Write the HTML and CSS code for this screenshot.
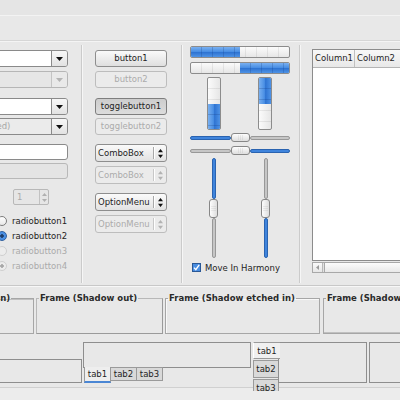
FILE: index.html
```html
<!DOCTYPE html>
<html lang="en">
<head>
  <meta charset="UTF-8">
  <meta name="viewport" content="width=device-width, initial-scale=1.0">
  <title>Widget Factory</title>
  <link rel="stylesheet" href="styles.css">
</head>
<body>
  <div class="window">
    <div class="menubar"></div>
    <div class="toolbar"></div>

    <div class="main">
      <!-- Entries, combos, spin, radios -->
      <div class="col col-a">
        <div class="combo">
          <div class="combo-entry"></div>
          <div class="combo-btn"><svg width="7" height="4" viewBox="0 0 7 4"><path d="M0 0h7L3.5 4z"/></svg></div>
        </div>
        <div class="combo combo-off gap-s">
          <div class="combo-entry"></div>
          <div class="combo-btn"><svg width="7" height="4" viewBox="0 0 7 4"><path d="M0 0h7L3.5 4z"/></svg></div>
        </div>
        <div class="combo gap-l">
          <div class="combo-entry"></div>
          <div class="combo-btn"><svg width="7" height="4" viewBox="0 0 7 4"><path d="M0 0h7L3.5 4z"/></svg></div>
        </div>
        <div class="combo combo-ro gap-xs">
          <div class="combo-entry">(disabled)</div>
          <div class="combo-btn"><svg width="7" height="4" viewBox="0 0 7 4"><path d="M0 0h7L3.5 4z"/></svg></div>
        </div>
        <div class="entry gap-m"></div>
        <div class="entry entry-off gap-xs"></div>
        <div class="spin">
          <span class="spin-val">1</span>
          <div class="spin-btns">
            <svg width="5" height="3" viewBox="0 0 5 3"><path d="M2.5 0L5 3H0z"/></svg>
            <svg width="5" height="3" viewBox="0 0 5 3"><path d="M0 0h5L2.5 3z"/></svg>
          </div>
        </div>
        <div class="radios">
          <div class="radio-row"><span class="radio"></span>radiobutton1</div>
          <div class="radio-row"><span class="radio on"></span>radiobutton2</div>
          <div class="radio-row off"><span class="radio"></span>radiobutton3</div>
          <div class="radio-row off"><span class="radio on"></span>radiobutton4</div>
        </div>
      </div>
      <div class="vsep"></div>

      <!-- Buttons -->
      <div class="col col-b">
        <div class="btn">button1</div>
        <div class="btn btn-off gap-s">button2</div>
        <div class="btn btn-down gap-l">togglebutton1</div>
        <div class="btn btn-off gap-xs">togglebutton2</div>
        <div class="cbox gap-m">
          <span class="cbox-text">ComboBox</span>
          <span class="cbox-sep"></span>
          <span class="cbox-arrows"><svg width="5" height="9" viewBox="0 0 5 9"><path d="M2.5 0L5 3.2H0zM0 5.8h5L2.5 9z"/></svg></span>
        </div>
        <div class="cbox cbox-off gap-s">
          <span class="cbox-text">ComboBox</span>
          <span class="cbox-sep"></span>
          <span class="cbox-arrows"><svg width="5" height="9" viewBox="0 0 5 9"><path d="M2.5 0L5 3.2H0zM0 5.8h5L2.5 9z"/></svg></span>
        </div>
        <div class="cbox gap-m">
          <span class="cbox-text">OptionMenu</span>
          <span class="cbox-sep"></span>
          <span class="cbox-arrows"><svg width="5" height="9" viewBox="0 0 5 9"><path d="M2.5 0L5 3.2H0zM0 5.8h5L2.5 9z"/></svg></span>
        </div>
        <div class="cbox cbox-off gap-s">
          <span class="cbox-text">OptionMenu</span>
          <span class="cbox-sep"></span>
          <span class="cbox-arrows"><svg width="5" height="9" viewBox="0 0 5 9"><path d="M2.5 0L5 3.2H0zM0 5.8h5L2.5 9z"/></svg></span>
        </div>
      </div>
      <div class="vsep"></div>

      <!-- Progress bars and scales -->
      <div class="col col-c">
        <div class="hprog"><div class="fill" style="width: 50%"></div></div>
        <div class="hprog hprog-rev"><div class="fill" style="width: 50%"></div></div>
        <div class="vprog-row">
          <div class="vprog"><div class="fill" style="height: 50%"></div></div>
          <div class="vprog vprog-rev"><div class="fill" style="height: 50%"></div></div>
        </div>
        <div class="hscale one">
          <div class="trough blue" style="width: 43px"></div>
          <div class="thumb"></div>
          <div class="trough grey"></div>
        </div>
        <div class="hscale two">
          <div class="trough grey" style="width: 41px"></div>
          <div class="thumb"></div>
          <div class="trough blue"></div>
        </div>
        <div class="vscale-row">
          <div class="vscale">
            <div class="trough blue" style="height: 40px"></div>
            <div class="thumb"></div>
            <div class="trough grey"></div>
          </div>
          <div class="vscale">
            <div class="trough grey" style="height: 40px"></div>
            <div class="thumb"></div>
            <div class="trough blue"></div>
          </div>
        </div>
        <div class="check-row">
          <span class="check"><svg width="7" height="7" viewBox="0 0 7 7"><path d="M1 3.6l1.8 2L6.2 0.8" fill="none" stroke="#fff" stroke-width="1.4"/></svg></span>
          Move In Harmony
        </div>
      </div>
      <div class="vsep"></div>

      <!-- Tree view -->
      <div class="col col-d">
        <div class="tree">
          <div class="tree-head">
            <div class="tree-col first">Column1</div>
            <div class="tree-col">Column2</div>
          </div>
        </div>
        <div class="hscroll">
          <div class="hscroll-btn"><svg width="3" height="5" viewBox="0 0 3 5"><path d="M3 0v5L0 2.5z"/></svg></div>
          <div class="hscroll-slider"><span class="grip"></span></div>
        </div>
      </div>
    </div>

    <div class="hsep"></div>

    <!-- Frames -->
    <div class="frames">
      <fieldset class="frame f1"><legend>Frame (Shadow in)</legend></fieldset>
      <fieldset class="frame f2"><legend>Frame (Shadow out)</legend></fieldset>
      <fieldset class="frame f3"><legend>Frame (Shadow etched in)</legend></fieldset>
      <fieldset class="frame f4"><legend>Frame (Shadow etched out)</legend></fieldset>
    </div>

    <!-- Notebooks -->
    <div class="notebooks">
      <div class="nb nb-top"></div>
      <div class="nb nb-bottom">
        <div class="nb-page"></div>
        <div class="nb-tabs">
          <div class="tab active">tab1</div>
          <div class="tab">tab2</div>
          <div class="tab">tab3</div>
        </div>
      </div>
      <div class="nb nb-left">
        <div class="nb-tabs">
          <div class="tab active">tab1</div>
          <div class="tab">tab2</div>
          <div class="tab">tab3</div>
        </div>
        <div class="nb-page"></div>
      </div>
      <div class="nb nb-right"></div>
    </div>

    <div class="statusbar"></div>
  </div>
</body>
</html>
```

FILE: styles.css
```css
* {
  margin: 0;
  padding: 0;
  box-sizing: border-box;
}

html, body {
  width: 400px;
  height: 400px;
  overflow: hidden;
}

body {
  background: #e8e8e8;
  font-family: "DejaVu Sans", "Liberation Sans", sans-serif;
  font-size: 8.5px;
  color: #1e1e1e;
}

/* The window is wider than the shot, so it starts off to the left */
.window {
  margin-left: -90px;
  width: 520px;
}

.menubar {
  height: 16px;
  background: #e5e5e5;
  border-bottom: 1px solid #f3f3f3;
}

.toolbar {
  height: 25px;
  background: #e8e8e8;
  border-bottom: 1px solid #d6d6d6;
}

.main {
  display: flex;
  align-items: flex-start;
  height: 244px;
  border-top: 1px solid #f4f4f4;
}

.vsep {
  width: 2px;
  height: 238px;
  margin-top: 3px;
  border-left: 1px solid #cbcbcb;
  background: #f6f6f6;
}

.col {
  display: flex;
  flex-direction: column;
  flex-shrink: 0;
}

.col-a { width: 171px; padding-top: 8px; padding-left: 50px; }
.col-b { width: 98px; padding-top: 8px; padding-left: 12px; }
.col-c { width: 116px; padding-top: 4px; padding-left: 7px; }
.col-d { flex: 1; padding-top: 7px; padding-left: 11px; }

.gap-xs { margin-top: 3px; }
.gap-s { margin-top: 4px; }
.gap-m { margin-top: 9px; }
.gap-l { margin-top: 10px; }

/* Combo entries */
.combo {
  display: flex;
  width: 108px;
  height: 17px;
  border: 1px solid #8a8a8a;
  border-radius: 3px;
  overflow: hidden;
}

.combo-entry {
  flex: 1;
  background: #fff;
  line-height: 15px;
  padding-left: 7px;
  color: #a6a6a6;
}

.combo-btn {
  width: 16px;
  border-left: 1px solid #8a8a8a;
  background: linear-gradient(#f7f7f7, #e2e2e2);
  display: flex;
  align-items: center;
  justify-content: center;
  color: #111;
}

.combo-btn svg { fill: currentColor; }

.combo-off { border-color: #b6b6b6; }
.combo-off .combo-entry { background: #e6e6e6; }
.combo-off .combo-btn { border-color: #c4c4c4; background: #e9e9e9; color: #b4b4b4; }

.combo-ro .combo-entry { background: #ebebeb; }

.entry {
  width: 108px;
  height: 16px;
  border: 1px solid #8a8a8a;
  border-radius: 3px;
  background: #fff;
}

.entry-off {
  border-color: #b8b8b8;
  background: #e4e4e4;
}

.spin {
  display: flex;
  width: 36px;
  height: 16px;
  margin-top: 10px;
  margin-left: 53px;
  border: 1px solid #b8b8b8;
  border-radius: 2px;
  background: #e6e6e6;
  color: #ababab;
}

.spin-val {
  flex: 1;
  padding-left: 3px;
  line-height: 14px;
}

.spin-btns {
  width: 9px;
  border-left: 1px solid #c2c2c2;
  display: flex;
  flex-direction: column;
  align-items: center;
  justify-content: space-around;
  padding: 1px 0;
  fill: #b0b0b0;
}

/* Radio buttons */
.radios {
  margin-top: 8px;
  margin-left: 37px;
}

.radio-row {
  display: flex;
  align-items: center;
  height: 15px;
}

.radio {
  width: 10px;
  height: 10px;
  margin-right: 5px;
  border: 1px solid #7c7c7c;
  border-radius: 50%;
  background: linear-gradient(#ffffff, #e8e8e8);
}

.radio.on {
  border-color: #2e5f9f;
  background: radial-gradient(circle, #1e3e6a 0 1.5px, #4b8fe2 2px);
}

.radio-row.off { color: #ababab; }
.radio-row.off .radio { border-color: #cfcfcf; background: #ececec; }
.radio-row.off .radio.on { background: radial-gradient(circle, #a8a8a8 0 1.5px, #ececec 2px); }

/* Buttons */
.btn {
  width: 72px;
  height: 17px;
  border: 1px solid #8e8e8e;
  border-radius: 3px;
  background: linear-gradient(#fafafa, #dfdfdf);
  text-align: center;
  line-height: 15px;
}

.btn-off {
  border-color: #bdbdbd;
  background: #ebebeb;
  color: #ababab;
}

.btn-down {
  border-color: #7e7e7e;
  background: linear-gradient(#cdcdcd, #dcdcdc);
}

.cbox {
  display: flex;
  align-items: center;
  width: 72px;
  height: 18px;
  border: 1px solid #8e8e8e;
  border-radius: 3px;
  background: linear-gradient(#fafafa, #e2e2e2);
}

.cbox-text {
  flex: 1;
  padding-left: 2px;
}

.cbox-sep {
  width: 1px;
  height: 12px;
  background: #a8a8a8;
  box-shadow: 1px 0 0 #fff;
}

.cbox-arrows {
  width: 12px;
  display: flex;
  justify-content: center;
  fill: #111;
}

.cbox-off {
  border-color: #bdbdbd;
  background: #ebebeb;
  color: #ababab;
}

.cbox-off .cbox-sep { background: #c8c8c8; }
.cbox-off .cbox-arrows { fill: #b2b2b2; }

/* Progress bars */
.hprog {
  width: 100px;
  height: 12px;
  margin-bottom: 4px;
  display: flex;
  border: 1px solid #8c8c8c;
  border-radius: 2px;
  overflow: hidden;
  background:
    repeating-linear-gradient(90deg, transparent 0 10px, rgba(0, 0, 0, 0.07) 10px 11px),
    linear-gradient(#fbfbfb, #e6e6e6);
}

.hprog-rev { justify-content: flex-end; }

.fill {
  background:
    repeating-linear-gradient(90deg, transparent 0 10px, rgba(20, 60, 130, 0.25) 10px 11px),
    linear-gradient(#79b0f0, #4a8fe4 45%, #2f74d2 55%, #4f93e6);
}

.vprog-row {
  display: flex;
  gap: 37px;
  margin-top: -1px;
  padding-left: 17px;
}

.vprog {
  width: 14px;
  height: 53px;
  display: flex;
  flex-direction: column;
  justify-content: flex-end;
  border: 1px solid #8c8c8c;
  border-radius: 2px;
  overflow: hidden;
  background:
    repeating-linear-gradient(180deg, transparent 0 10px, rgba(0, 0, 0, 0.07) 10px 11px),
    linear-gradient(90deg, #fbfbfb, #e6e6e6);
}

.vprog-rev { justify-content: flex-start; }

.vprog .fill {
  background:
    repeating-linear-gradient(180deg, transparent 0 10px, rgba(20, 60, 130, 0.25) 10px 11px),
    linear-gradient(90deg, #79b0f0, #4a8fe4 45%, #2f74d2 55%, #4f93e6);
}

/* Scales */
.hscale {
  display: flex;
  align-items: center;
  width: 100px;
  height: 9px;
}

.hscale.one { margin-top: 3px; }
.hscale.two { margin-top: 4px; }

.trough {
  flex: 1;
  border-radius: 2px;
}

.hscale .trough { height: 4px; flex-shrink: 0; }
.hscale .trough.grey, .hscale .trough:last-child { flex: 1; }

.trough.blue {
  background: #3f84dc;
  border: 1px solid #2a63b0;
}

.trough.grey {
  background: #c6c6c6;
  border: 1px solid #989898;
}

.thumb {
  flex-shrink: 0;
  width: 19px;
  height: 9px;
  border: 1px solid #878787;
  border-radius: 3px;
  background:
    repeating-linear-gradient(90deg, transparent 0 1px, rgba(0, 0, 0, 0.06) 1px 2px) center / 7px 5px no-repeat,
    linear-gradient(#fdfdfd, #dedede);
}

.vscale-row {
  display: flex;
  gap: 43px;
  margin-top: 3px;
  padding-left: 19px;
}

.vscale {
  display: flex;
  flex-direction: column;
  align-items: center;
  width: 9px;
  height: 100px;
}

.vscale .trough { width: 4px; flex-shrink: 0; }
.vscale .trough:last-child { flex: 1; }

.vscale .thumb {
  width: 9px;
  height: 19px;
  background:
    repeating-linear-gradient(180deg, transparent 0 1px, rgba(0, 0, 0, 0.06) 1px 2px) center / 5px 7px no-repeat,
    linear-gradient(90deg, #fdfdfd, #dedede);
}

.check-row {
  display: flex;
  align-items: center;
  gap: 4px;
  margin-top: 5px;
  margin-left: 2px;
  height: 9px;
}

.check {
  width: 9px;
  height: 9px;
  border: 1px solid #2a5896;
  background: #4a8ee2;
  display: flex;
  align-items: center;
  justify-content: center;
}

/* Tree view */
.tree {
  height: 212px;
  border: 1px solid #8c8c8c;
  background: #fff;
}

.tree-head {
  display: flex;
  height: 18px;
  border-bottom: 1px solid #b4b4b4;
  background: linear-gradient(#f8f8f8, #e8e8e8);
  line-height: 17px;
}

.tree-col { padding-left: 2px; }

.tree-col.first {
  width: 42px;
  border-right: 1px solid #c0c0c0;
}

.hscroll {
  display: flex;
  height: 11px;
  margin-top: 1px;
  border: 1px solid #a8a8a8;
  background: #e2e2e2;
}

.hscroll-btn {
  width: 10px;
  border-right: 1px solid #b8b8b8;
  background: linear-gradient(#fafafa, #e6e6e6);
  display: flex;
  align-items: center;
  justify-content: center;
  fill: #9a9a9a;
}

.hscroll-slider {
  flex: 1;
  margin-left: 1px;
  display: flex;
  align-items: center;
  justify-content: flex-end;
  padding-right: 4px;
  border-left: 1px solid #a8a8a8;
  background: linear-gradient(#fcfcfc, #e8e8e8);
}

.grip {
  width: 10px;
  height: 5px;
  background: repeating-linear-gradient(90deg, transparent 0 1px, rgba(0, 0, 0, 0.1) 1px 2px);
}

.hsep {
  height: 2px;
  border-top: 1px solid #c8c8c8;
  background: #f7f7f7;
}

/* Frames */
.frames {
  display: flex;
  height: 51px;
  padding-top: 6px;
}

.frame {
  height: 41px;
  padding: 0 2px;
  min-width: 0;
  border: 1px solid #a6a6a6;
  flex-shrink: 0;
}

.frame legend {
  padding: 0 1px;
  font-weight: bold;
  line-height: 10px;
  color: #2a2a2a;
}

.f1 { width: 118px; margin-left: 6px; box-shadow: inset 1px 1px 0 #c0c0c0; }
.f2 { width: 127px; margin-left: 2px; border-color: #b8b8b8 #9a9a9a #9a9a9a #b8b8b8; }
.f3 { width: 155px; margin-left: 2px; box-shadow: inset 1px 1px 0 #f8f8f8; }
.f4 { width: 160px; margin-left: 3px; box-shadow: inset -1px -1px 0 #c0c0c0; }

/* Notebooks */
.notebooks {
  display: flex;
  align-items: flex-start;
  height: 49px;
  padding-top: 4px;
}

.nb { flex-shrink: 0; }

.nb-top {
  width: 168px;
  height: 24px;
  margin-left: 4px;
  margin-top: 17px;
  border: 1px solid #8e8e8e;
}

.nb-bottom {
  width: 168px;
  margin-left: 1px;
}

.nb-bottom .nb-page {
  height: 26px;
  border: 1px solid #8e8e8e;
}

.nb-bottom .nb-tabs {
  display: flex;
  align-items: flex-start;
  padding-left: 1px;
  margin-top: -1px;
}

.tab {
  width: 27px;
  height: 14px;
  border: 1px solid #9a9a9a;
  background: #d9d9d9;
  text-align: center;
  line-height: 12px;
}

.tab + .tab { margin-left: -1px; }

.nb-bottom .tab.active {
  height: 16px;
  border-top: none;
  border-color: #9a9a9a;
  border-bottom: 2px solid #4a86d4;
  background: #eeeeee;
  line-height: 15px;
}

/* Tabs on the left run past the bottom edge, so the notebook clips them */
.nb-left {
  display: flex;
  align-items: flex-start;
  width: 114px;
  height: 49px;
  margin-left: 2px;
  overflow: hidden;
}

.nb-left .nb-tabs {
  display: flex;
  flex-direction: column;
  width: 26px;
}

.nb-left .tab {
  width: 26px;
  height: 18px;
  margin-left: 0;
  margin-top: 1px;
  line-height: 16px;
}

.nb-left .tab.active {
  position: relative;
  z-index: 1;
  width: 27px;
  height: 17px;
  margin-top: 0;
  border-right: none;
  border-left-color: #fff;
  background: #f0f0f0;
  box-shadow: -1px 0 0 #9a9a9a;
}

.nb-left .nb-page {
  flex: 1;
  height: 41px;
  margin-left: -1px;
  border: 1px solid #8e8e8e;
}

.nb-right {
  width: 60px;
  height: 41px;
  margin-left: 2px;
  border: 1px solid #8e8e8e;
}

.statusbar {
  height: 14px;
  border-top: 1px solid #d0d0d0;
  background: #ececec;
}
```
